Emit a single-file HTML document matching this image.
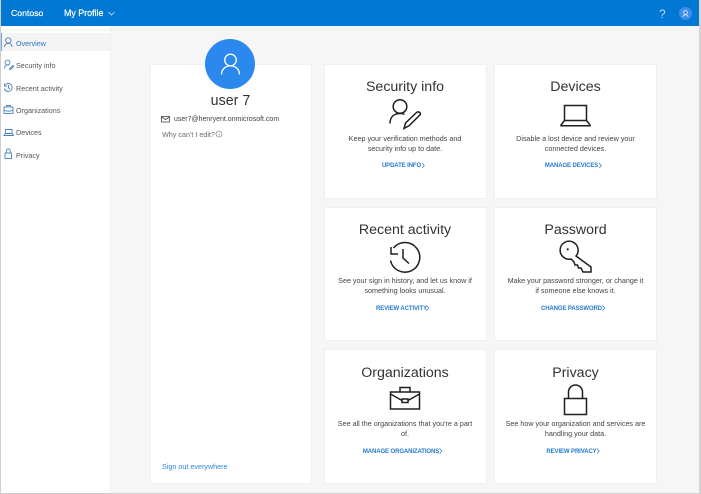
<!DOCTYPE html>
<html><head><meta charset="utf-8"><style>
html,body{margin:0;padding:0}
body{width:701px;height:494px;position:relative;overflow:hidden;background:#f6f6f6;font-family:"Liberation Sans",sans-serif;color:#333}
.abs,.card,.t,.d,.l,.n{position:absolute}
#lb{left:0;top:0;width:1px;height:494px;background:#cfcfcf}
#rb{left:699px;top:0;width:2px;height:494px;background:#d4d4d4}
#bb{left:0;top:492.5px;width:701px;height:1.5px;background:#cfcfcf}
#top{left:1px;top:0;width:698px;height:26px;background:#0078d4;color:#fff}
#side{left:1px;top:26px;width:109px;height:467px;background:#fff;border-right:1px solid #eeeeee}
#sel{left:1px;top:33px;width:109px;height:18px;background:#f4f4f4}
#selb{left:1px;top:33px;width:1px;height:18px;background:#6ea8e0}
.n{left:16px;font-size:7.2px;line-height:10px;color:#555;white-space:nowrap}
.card{background:#fff;border:1px solid #f0f0f0;box-sizing:border-box}
.t{font-size:14.2px;line-height:18px;color:#333;text-align:center;white-space:nowrap;transform:translateX(-50%)}
.d{font-size:7.2px;line-height:10px;color:#444;text-align:center;white-space:nowrap;transform:translateX(-50%)}
.l{font-size:6px;line-height:8px;color:#2679cc;text-align:center;white-space:nowrap;transform:translateX(-50%);font-weight:bold;letter-spacing:-.1px}
svg{position:absolute;overflow:visible}
</style></head><body>
<div id="top" class="abs">
<div class="abs" style="left:10px;top:8px;font-size:8.7px;line-height:11px;-webkit-text-stroke:.2px #fff">Contoso</div>
<div class="abs" style="left:63px;top:8px;font-size:8.9px;line-height:11px;-webkit-text-stroke:.2px #fff">My Profile</div>
<svg style="left:-1px;top:0" width="699" height="26" fill="none" stroke="#cfe4f7" stroke-width=".8"><path d="M108.5 12l3 3 3-3"/></svg>
<div class="abs" style="left:658px;top:6.5px;font-size:12px;line-height:14px;color:#bcdcf5">?</div>
<div class="abs" style="left:678px;top:7px;width:13px;height:13px;border-radius:50%;background:#3d8eea"></div>
<svg style="left:-1px;top:0" width="699" height="26" fill="none" stroke="#d5e6fa" stroke-width=".9"><circle cx="685.5" cy="12.5" r="1.9"/><path d="M683 17c0-3 5-3 5 0"/></svg>
</div>
<div id="side" class="abs"></div><div id="sel" class="abs"></div><div id="selb" class="abs"></div>
<div class="n" style="top:38.500px;color:#2f76c4">Overview</div>
<div class="n" style="top:61px">Security info</div>
<div class="n" style="top:83.500px">Recent activity</div>
<div class="n" style="top:106px">Organizations</div>
<div class="n" style="top:128px">Devices</div>
<div class="n" style="top:151px">Privacy</div>
<svg style="left:0;top:0" width="20" height="165" fill="none" stroke="#4a80bd" stroke-width=".9">
<circle cx="8.3" cy="40.5" r="2.7"/><path d="M4.6 47c0-5 7.400-5 7.400 0"/>
<circle cx="7.500" cy="62.500" r="2.400"/><path d="M4.500 68.500c0-3.500 3-4 5-3.500M9.500 69l3.500-3.500 .8.8-3.500 3.500z"/>
<path d="M5.500 84.500a4 4 0 1 1-1.200 4M8.500 85v2.700l1.500 1.300M4.500 83.500v2.500h2.500"/>
<rect x="4" y="107" width="9" height="6.500"/><path d="M6.500 107v-1.500h4v1.500M4 110l3 1.200h3l3-1.200"/>
<path d="M5.500 129.500h6.500v4h-6.500zM4 135.500h9.500l-1.200-2h-7.100z"/>
<rect x="5" y="153" width="6.500" height="5.500"/><path d="M6.300 153v-2a2 2 0 0 1 4 0v2"/>
</svg>

<div class="card" style="left:150px;top:64px;width:162px;height:420px"></div>
<div class="abs" style="left:205px;top:39px;width:50px;height:50px;border-radius:50%;background:#2b88ed"></div>
<svg style="left:0;top:0" width="300" height="100" fill="none" stroke="#fff" stroke-width="1.300"><circle cx="230.500" cy="60" r="5.800"/><path d="M221.500 74.500c0-11.500 18-11.500 18 0"/></svg>
<div class="t" style="left:230.500px;top:92px;font-size:14.300px">user 7</div>
<svg style="left:0;top:0" width="180" height="130" fill="none" stroke="#444" stroke-width=".8"><rect x="161.500" y="116.500" width="8" height="5.500"/><path d="M161.500 117l4 2.500 4-2.500"/></svg>
<div class="abs" style="left:174px;top:114.500px;font-size:7px;line-height:10px;color:#444;white-space:nowrap">user7@henryent.onmicrosoft.com</div>
<div class="abs" style="left:162px;top:130px;font-size:7.200px;line-height:10px;color:#6b6b6b;white-space:nowrap">Why can't I edit?</div>
<svg style="left:0;top:0" width="230" height="140" fill="none" stroke="#777" stroke-width=".6"><circle cx="219" cy="134" r="3"/><path d="M219 133.500v2.200M219 132v.7"/></svg>
<div class="abs" style="left:162px;top:461.500px;font-size:7.200px;line-height:10px;color:#2f86df;white-space:nowrap">Sign out everywhere</div>

<div class="card" style="left:324px;top:64px;width:163px;height:135px"></div>
<div class="card" style="left:494px;top:64px;width:163px;height:135px"></div>
<div class="card" style="left:324px;top:207px;width:163px;height:134px"></div>
<div class="card" style="left:494px;top:207px;width:163px;height:134px"></div>
<div class="card" style="left:324px;top:349px;width:163px;height:135px"></div>
<div class="card" style="left:494px;top:349px;width:163px;height:135px"></div>

<div class="t" style="left:405px;top:78px">Security info</div>
<div class="d" style="left:405px;top:134px">Keep your verification methods and</div>
<div class="d" style="left:405px;top:144px">security info up to date.</div>
<div class="l" style="left:401.500px;top:162px">UPDATE INFO</div>

<div class="t" style="left:575.500px;top:78px">Devices</div>
<div class="d" style="left:575.500px;top:134px">Disable a lost device and review your</div>
<div class="d" style="left:575.500px;top:144px">connected devices.</div>
<div class="l" style="left:571.500px;top:162px">MANAGE DEVICES</div>

<div class="t" style="left:405px;top:221px">Recent activity</div>
<div class="d" style="left:405px;top:276px">See your sign in history, and let us know if</div>
<div class="d" style="left:405px;top:286px">something looks unusual.</div>
<div class="l" style="left:401.500px;top:305px">REVIEW ACTIVITY</div>

<div class="t" style="left:575.500px;top:221px">Password</div>
<div class="d" style="left:575.500px;top:276px">Make your password stronger, or change it</div>
<div class="d" style="left:575.500px;top:286px">if someone else knows it.</div>
<div class="l" style="left:571.500px;top:305px">CHANGE PASSWORD</div>

<div class="t" style="left:405px;top:364px">Organizations</div>
<div class="d" style="left:405px;top:419px">See all the organizations that you're a part</div>
<div class="d" style="left:405px;top:429px">of.</div>
<div class="l" style="left:401px;top:447.500px">MANAGE ORGANIZATIONS</div>

<div class="t" style="left:575.500px;top:364px">Privacy</div>
<div class="d" style="left:575.500px;top:419px">See how your organization and services are</div>
<div class="d" style="left:575.500px;top:429px">handling your data.</div>
<div class="l" style="left:571.500px;top:447.500px">REVIEW PRIVACY</div>

<svg style="left:0;top:0" width="701" height="494" fill="none" stroke="#1f1f1f" stroke-width="1.500">
<circle cx="400" cy="106.500" r="6.800"/><path d="M390 123.500c0-7 4.500-10 10.500-10 1.500 0 3 .3 4 .8"/><path d="M404 128.500l1.500-5.500 11-10.500c1-1 4-1 3.800 2l-11 11z"/>
<path d="M564.500 105.500h22v15h-22zM564.500 120.500l-3.500 4.500v.8h29v-.8l-3.500-4.500"/>
<path d="M393.500 248a14.800 14.800 0 1 1-3 12.500"/><path d="M403 249v9l6 5.500"/><path d="M391 247v7h7"/>
<path d="M576 256L591 267V272H583L581 268H578.500L577.500 265H575L574 262L571 259A9 9 0 1 1 576 256Z"/>
<circle cx="567.700" cy="249.300" r="1.100" fill="#1f1f1f" stroke="none"/>
<rect x="390.500" y="392" width="29" height="17"/><path d="M400 392v-4.500h10v4.500M390.500 394l11.500 6.500M408 400.500l11.500-6.500"/><rect x="402" y="399" width="6" height="3.500"/>
<rect x="564.500" y="398.500" width="22" height="16"/><path d="M568.500 398.500v-6.500a7 7 0 0 1 14 0v6.500"/>
</svg>
<svg style="left:0;top:0" width="701" height="494" fill="none" stroke="#2679cc" stroke-width=".7">
<path d="M422 163l2.300 2.600-2.300 2.600M599 163l2.300 2.600-2.300 2.600M426.500 305.500l2.300 2.600-2.300 2.600M602.500 305.500l2.300 2.600-2.300 2.600M439.500 448.500l2.300 2.600-2.300 2.600M597 448.500l2.300 2.600-2.300 2.600"/>
</svg>
<div id="lb" class="abs"></div><div id="rb" class="abs"></div><div id="bb" class="abs"></div>
</body></html>
